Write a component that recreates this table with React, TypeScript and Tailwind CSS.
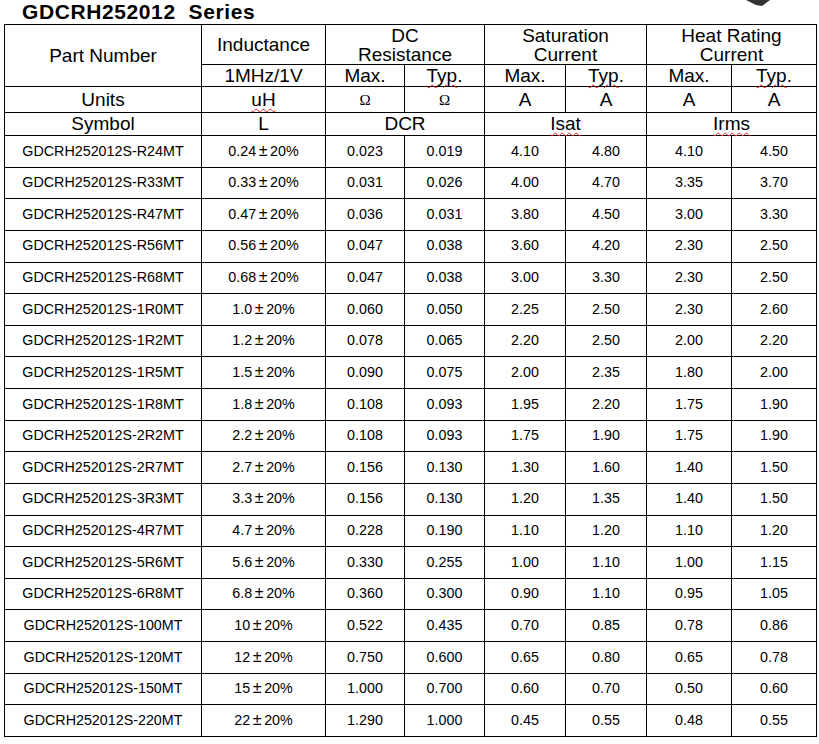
import React from "react";

type Row = {
    part: string;
    l: string;
    dcrMax: string;
    dcrTyp: string;
    isatMax: string;
    isatTyp: string;
    irmsMax: string;
    irmsTyp: string;
};

const rows: Row[] = [
    { part: "GDCRH252012S-R24MT", l: "0.24", dcrMax: "0.023", dcrTyp: "0.019", isatMax: "4.10", isatTyp: "4.80", irmsMax: "4.10", irmsTyp: "4.50" },
    { part: "GDCRH252012S-R33MT", l: "0.33", dcrMax: "0.031", dcrTyp: "0.026", isatMax: "4.00", isatTyp: "4.70", irmsMax: "3.35", irmsTyp: "3.70" },
    { part: "GDCRH252012S-R47MT", l: "0.47", dcrMax: "0.036", dcrTyp: "0.031", isatMax: "3.80", isatTyp: "4.50", irmsMax: "3.00", irmsTyp: "3.30" },
    { part: "GDCRH252012S-R56MT", l: "0.56", dcrMax: "0.047", dcrTyp: "0.038", isatMax: "3.60", isatTyp: "4.20", irmsMax: "2.30", irmsTyp: "2.50" },
    { part: "GDCRH252012S-R68MT", l: "0.68", dcrMax: "0.047", dcrTyp: "0.038", isatMax: "3.00", isatTyp: "3.30", irmsMax: "2.30", irmsTyp: "2.50" },
    { part: "GDCRH252012S-1R0MT", l: "1.0", dcrMax: "0.060", dcrTyp: "0.050", isatMax: "2.25", isatTyp: "2.50", irmsMax: "2.30", irmsTyp: "2.60" },
    { part: "GDCRH252012S-1R2MT", l: "1.2", dcrMax: "0.078", dcrTyp: "0.065", isatMax: "2.20", isatTyp: "2.50", irmsMax: "2.00", irmsTyp: "2.20" },
    { part: "GDCRH252012S-1R5MT", l: "1.5", dcrMax: "0.090", dcrTyp: "0.075", isatMax: "2.00", isatTyp: "2.35", irmsMax: "1.80", irmsTyp: "2.00" },
    { part: "GDCRH252012S-1R8MT", l: "1.8", dcrMax: "0.108", dcrTyp: "0.093", isatMax: "1.95", isatTyp: "2.20", irmsMax: "1.75", irmsTyp: "1.90" },
    { part: "GDCRH252012S-2R2MT", l: "2.2", dcrMax: "0.108", dcrTyp: "0.093", isatMax: "1.75", isatTyp: "1.90", irmsMax: "1.75", irmsTyp: "1.90" },
    { part: "GDCRH252012S-2R7MT", l: "2.7", dcrMax: "0.156", dcrTyp: "0.130", isatMax: "1.30", isatTyp: "1.60", irmsMax: "1.40", irmsTyp: "1.50" },
    { part: "GDCRH252012S-3R3MT", l: "3.3", dcrMax: "0.156", dcrTyp: "0.130", isatMax: "1.20", isatTyp: "1.35", irmsMax: "1.40", irmsTyp: "1.50" },
    { part: "GDCRH252012S-4R7MT", l: "4.7", dcrMax: "0.228", dcrTyp: "0.190", isatMax: "1.10", isatTyp: "1.20", irmsMax: "1.10", irmsTyp: "1.20" },
    { part: "GDCRH252012S-5R6MT", l: "5.6", dcrMax: "0.330", dcrTyp: "0.255", isatMax: "1.00", isatTyp: "1.10", irmsMax: "1.00", irmsTyp: "1.15" },
    { part: "GDCRH252012S-6R8MT", l: "6.8", dcrMax: "0.360", dcrTyp: "0.300", isatMax: "0.90", isatTyp: "1.10", irmsMax: "0.95", irmsTyp: "1.05" },
    { part: "GDCRH252012S-100MT", l: "10", dcrMax: "0.522", dcrTyp: "0.435", isatMax: "0.70", isatTyp: "0.85", irmsMax: "0.78", irmsTyp: "0.86" },
    { part: "GDCRH252012S-120MT", l: "12", dcrMax: "0.750", dcrTyp: "0.600", isatMax: "0.65", isatTyp: "0.80", irmsMax: "0.65", irmsTyp: "0.78" },
    { part: "GDCRH252012S-150MT", l: "15", dcrMax: "1.000", dcrTyp: "0.700", isatMax: "0.60", isatTyp: "0.70", irmsMax: "0.50", irmsTyp: "0.60" },
    { part: "GDCRH252012S-220MT", l: "22", dcrMax: "1.290", dcrTyp: "1.000", isatMax: "0.45", isatTyp: "0.55", irmsMax: "0.48", irmsTyp: "0.55" },
];

// word's red spell-check squiggle
function Squiggle({ children }: { children: React.ReactNode }) {
    return (
        <span className="underline decoration-wavy decoration-[#e02020] decoration-1 underline-offset-[2px]">
            {children}
        </span>
    );
}

const th = "border border-black p-0 text-center font-normal text-[19px] leading-[18px] text-black";
const th2 = "border border-black p-0 text-center font-normal text-[19px] leading-[19px] text-black";
const td = "border border-black p-0 text-center text-[14.3px] text-black";

export default function App() {
    return (
        <div className="relative w-[819px] h-[744px] bg-white overflow-hidden" style={{ fontFamily: '"Liberation Sans", Arial, sans-serif' }}>
            <svg className="absolute left-[746px] top-0" width="24" height="8" viewBox="0 0 24 8">
                <polygon points="0,0 24,0 16,6 10,5" fill="#333" />
            </svg>

            <div className="h-[24px] pl-[22px] text-[21px] leading-[24px] font-bold text-black tracking-[0.6px] whitespace-pre">
                GDCRH252012  Series
            </div>

            <table className="ml-[4px] border-collapse table-fixed w-[812px]">
                <colgroup>
                    <col className="w-[197px]" />
                    <col className="w-[124px]" />
                    <col className="w-[79px]" />
                    <col className="w-[80px]" />
                    <col className="w-[81px]" />
                    <col className="w-[81px]" />
                    <col className="w-[85px]" />
                    <col className="w-[85px]" />
                </colgroup>
                <thead>
                    <tr className="h-[40px]">
                        <th rowSpan={2} className={th}>Part Number</th>
                        <th className={th}>Inductance</th>
                        <th colSpan={2} className={th2}>DC<br />Resistance</th>
                        <th colSpan={2} className={th2}>Saturation<br />Current</th>
                        <th colSpan={2} className={th2}>Heat Rating<br />Current</th>
                    </tr>
                    <tr className="h-[22px]">
                        <th className={th}>1MHz/1V</th>
                        <th className={th}>Max.</th>
                        <th className={th}><Squiggle>Typ</Squiggle>.</th>
                        <th className={th}>Max.</th>
                        <th className={th}><Squiggle>Typ</Squiggle>.</th>
                        <th className={th}>Max.</th>
                        <th className={th}><Squiggle>Typ</Squiggle>.</th>
                    </tr>
                    <tr className="h-[26px]">
                        <th className={th}>Units</th>
                        <th className={th}><Squiggle>uH</Squiggle></th>
                        <th className={th}><span className="text-[15px]" style={{ fontFamily: '"Liberation Serif", serif' }}>Ω</span></th>
                        <th className={th}><span className="text-[15px]" style={{ fontFamily: '"Liberation Serif", serif' }}>Ω</span></th>
                        <th className={th}>A</th>
                        <th className={th}>A</th>
                        <th className={th}>A</th>
                        <th className={th}>A</th>
                    </tr>
                    <tr className="h-[23px]">
                        <th className={th}>Symbol</th>
                        <th className={th}>L</th>
                        <th colSpan={2} className={th}>DCR</th>
                        <th colSpan={2} className={th}><Squiggle>Isat</Squiggle></th>
                        <th colSpan={2} className={th}><Squiggle>Irms</Squiggle></th>
                    </tr>
                </thead>
                <tbody>
                    {rows.map((r) => (
                        <tr key={r.part} className="h-[31.63px]">
                            <td className={td}>{r.part}</td>
                            <td className={td}>
                                {r.l}
                                <span className="inline-block w-[14px] text-center text-[16px] leading-none">±</span>
                                20%
                            </td>
                            <td className={td}>{r.dcrMax}</td>
                            <td className={td}>{r.dcrTyp}</td>
                            <td className={td}>{r.isatMax}</td>
                            <td className={td}>{r.isatTyp}</td>
                            <td className={td}>{r.irmsMax}</td>
                            <td className={td}>{r.irmsTyp}</td>
                        </tr>
                    ))}
                </tbody>
            </table>
        </div>
    );
}
